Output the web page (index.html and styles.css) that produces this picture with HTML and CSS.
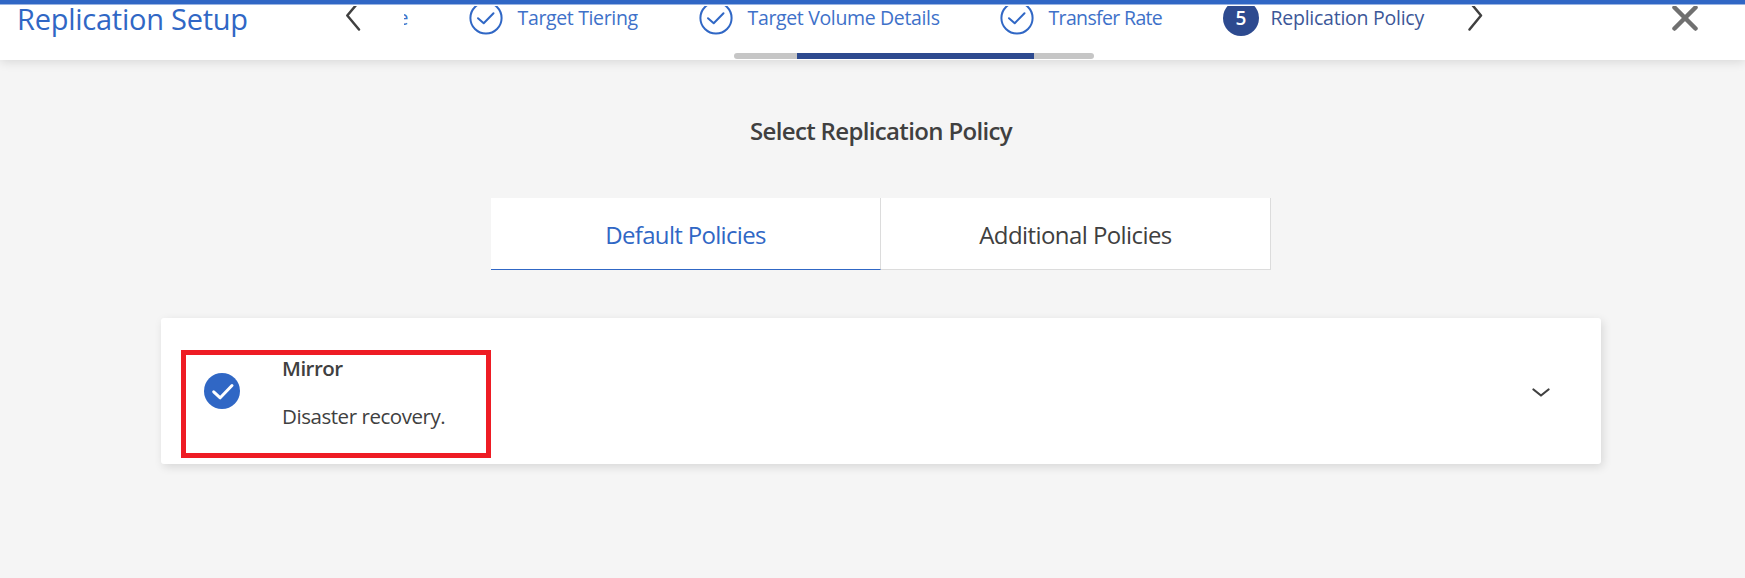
FILE: index.html
```html
<!DOCTYPE html>
<html lang="en">
<head>
<meta charset="utf-8">
<title>Replication Setup</title>
<link rel="stylesheet" href="styles.css">
</head>
<body>
<header class="header">
  <div class="header-clip">
    <div class="header-row">
      <h1 class="title">Replication Setup</h1>
      <svg class="arrow arrow-prev" width="16" height="34" viewBox="0 0 16 34"><path d="M14.500 1 2.300 15.500l11.700 14"/></svg>
      <nav class="steps">
        <span class="step-cut"><span>e</span></span>
        <div class="step step-tiering"><svg class="ring" width="36" height="36" viewBox="0 0 36 36"><circle cx="18" cy="18" r="15.6"/><path d="m10 18.2 5.7 5L25.500 13.200"/></svg><span>Target Tiering</span></div>
        <div class="step step-volume"><svg class="ring" width="36" height="36" viewBox="0 0 36 36"><circle cx="18" cy="18" r="15.6"/><path d="m10 18.2 5.7 5L25.500 13.200"/></svg><span>Target Volume Details</span></div>
        <div class="step step-rate"><svg class="ring" width="36" height="36" viewBox="0 0 36 36"><circle cx="18" cy="18" r="15.6"/><path d="m10 18.2 5.7 5L25.500 13.200"/></svg><span>Transfer Rate</span></div>
        <div class="step step-policy"><b class="number">5</b><span>Replication Policy</span></div>
      </nav>
      <svg class="arrow arrow-next" width="16" height="34" viewBox="0 0 16 34"><path d="m2 1 12 14.500-11.500 14"/></svg>
      <svg class="close" width="28" height="36" viewBox="0 0 28 36"><path d="m3.500 7.500 21 21m0-21-21 21"/></svg>
    </div>
    <div class="progress"><div class="progress-bar"></div></div>
  </div>
</header>
<main class="main">
  <h2 class="heading">Select Replication Policy</h2>
  <div class="tabs">
    <div class="tab tab-active">Default Policies</div>
    <div class="tab">Additional Policies</div>
  </div>
  <section class="card">
    <div class="marked">
      <svg class="check" width="36" height="36" viewBox="0 0 36 36"><circle cx="18" cy="18" r="18"/><path d="m9.700 18.800 6.500 6L28 12.500"/></svg>
      <div class="policy">
        <h3 class="policy-name">Mirror</h3>
        <p class="policy-text">Disaster recovery.</p>
      </div>
    </div>
    <svg class="expand" width="18" height="10" viewBox="0 0 18 10"><path d="m1.500 1.500 7.500 6 7.500-6"/></svg>
  </section>
</main>
</body>
</html>
```
FILE: styles.css
```css
* { box-sizing: border-box; }
body {
  margin: 0;
  height: 578px;
  overflow: hidden;
  background: #f5f5f5;
  color: #404040;
  font-family: "Open Sans", "Noto Sans", sans-serif;
  font-size: 20px;
}
h1, h2, h3, p { margin: 0; }
svg { display: block; flex: none; fill: none; stroke-linecap: round; stroke-linejoin: round; }

.header {
  position: relative;
  height: 60px;
  border-top: 4px solid #3067c5;
  background: #fff;
  box-shadow: 0 2px 10px rgba(0, 0, 0, .12);
}
.header-clip { height: 56px; border-top: 1px solid #9ab4e2; padding-top: 1px; overflow: clip; overflow-clip-margin: content-box; }
.header-row { display: flex; height: 47px; margin-top: -6px; margin-bottom: 6px; align-items: flex-start; }
.title {
  flex: none;
  width: 328px;
  margin: 6px 0 0 17px;
  font-size: 29px;
  font-weight: 400;
  line-height: 25px;
  letter-spacing: -.25px;
  color: #3067c5;
  white-space: nowrap;
}
.arrow { stroke: #404040; stroke-width: 2.5; }
.steps { display: flex; flex: none; width: 1065px; margin-left: 43px; height: 36px; overflow: hidden; color: #3e71c9; line-height: 36px; white-space: nowrap; }
.step-cut { display: flex; flex: none; justify-content: flex-end; width: 4px; }
.step-cut, .step span { font-size: 19.5px; line-height: 36px; letter-spacing: -.35px; }
.step { display: flex; flex: none; }
.step-tiering { margin-left: 60px; width: 230px; }
.step-volume { width: 301px; }
.step-rate { width: 224px; }
.step.step-rate span { letter-spacing: -.65px; }
.step-policy { color: #3c5798; }
.step span { margin-left: 13.5px; }
.step.step-policy span { margin-left: 11.5px; letter-spacing: -.25px; }
.ring { stroke: #3067c5; stroke-width: 2; }
.number { width: 36px; height: 36px; border-radius: 50%; background: #2d4a8f; color: #fff; font-size: 19px; font-weight: 600; line-height: 36px; text-align: center; }
.arrow-next { margin-left: -2px; }
.close { margin-left: 188px; stroke: #707070; stroke-width: 4.500; }
.progress { width: 360px; height: 6px; margin-left: 734px; border-radius: 3px; background: #c6c6c6; overflow: hidden; }
.progress-bar { width: 237px; height: 6px; margin-left: 63px; background: #2d4a8f; }

.main { display: flex; flex-direction: column; align-items: center; padding: 52px 0 0 17px; }
.heading { font-size: 24px; font-weight: 600; line-height: 38px; letter-spacing: -.65px; white-space: nowrap; }
.tabs { display: flex; margin-top: 48px; height: 72px; }
.tab { width: 390px; border-right: 1px solid #dcdcdc; border-bottom: 1px solid #dcdcdc; background: #fff; font-size: 24px; line-height: 74px; text-align: center; white-space: nowrap; letter-spacing: -.58px; }
.tab-active { color: #3067c5; letter-spacing: -.68px; background: linear-gradient(#3067c5, #3067c5) left bottom / 100% 1px no-repeat border-box, #fff; border-bottom-color: transparent; }
.card { display: flex; justify-content: space-between; width: 1440px; height: 146px; margin-top: 48px; padding: 32px 51px 6px 20px; border-radius: 3px; background: #fff; box-shadow: 2px 3px 10px rgba(0, 0, 0, .12); }
.marked { display: flex; width: 310px; height: 108px; border: 5px solid #ee1c24; }
.check { margin: 18px 0 0 18px; }
.check circle { fill: #3067c5; }
.check path { stroke: #fff; stroke-width: 3; }
.policy { margin-left: 42px; white-space: nowrap; }
.policy-name { font-size: 20.5px; font-weight: 600; line-height: 26px; letter-spacing: -.5px; }
.policy-text { margin-top: 22px; font-size: 20.5px; line-height: 26px; letter-spacing: -.45px; }
.expand { margin-top: 38px; stroke: #404040; stroke-width: 2.2; }
```
